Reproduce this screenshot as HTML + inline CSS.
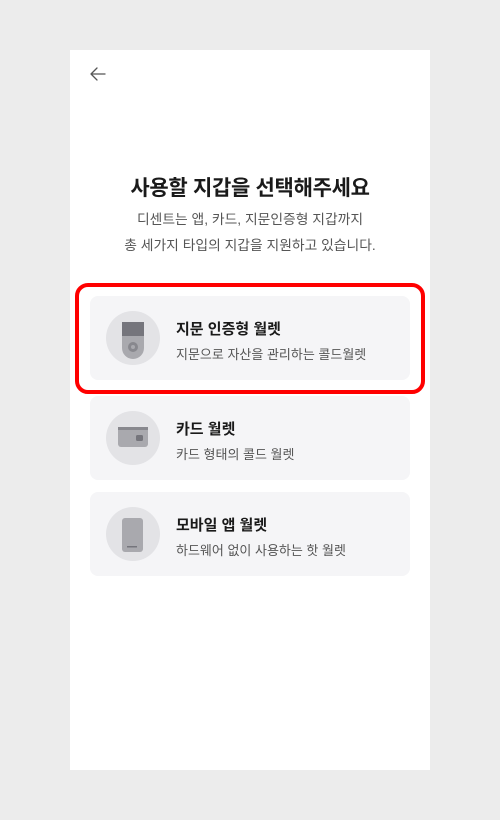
<!DOCTYPE html>
<html><head><meta charset="utf-8"><style>
*{margin:0;padding:0;box-sizing:border-box}
body{width:500px;height:820px;background:#ececec;font-family:"Liberation Sans","Noto Sans CJK KR",sans-serif;position:relative;overflow:hidden}
.panel{position:absolute;left:70px;top:50px;width:360px;height:720px;background:#fff}
.back{position:absolute;left:88px;top:64px}
h1{position:absolute;top:172px;left:70px;width:360px;text-align:center;font-size:21px;font-weight:700;color:#1a1a1a;letter-spacing:-0.3px}
.sub{position:absolute;top:207px;left:70px;width:360px;text-align:center;font-size:13.8px;line-height:26px;color:#555}
.card{position:absolute;left:90px;width:320px;height:84px;background:#f5f5f7;border-radius:8px}
.circ{position:absolute;left:16px;top:15px;width:54px;height:54px;border-radius:50%;background:#e3e3e6}
.t{position:absolute;left:86px;top:22px;font-size:15px;font-weight:700;color:#1a1a1a}
.d{position:absolute;left:86px;top:48px;font-size:13px;color:#555}
.red{position:absolute;left:75px;top:283px;width:350px;height:111px;border:4px solid #f00;border-radius:13px}
</style></head><body>
<div class="panel"></div>
<svg class="back" width="20" height="20" viewBox="0 0 20 20"><path d="M17 10H3M9 4L3 10l6 6" stroke="#555" stroke-width="1.3" fill="none" stroke-linecap="round" stroke-linejoin="round"/></svg>
<h1>사용할 지갑을 선택해주세요</h1>
<div class="sub">디센트는 앱, 카드, 지문인증형 지갑까지<br>총 세가지 타입의 지갑을 지원하고 있습니다.</div>
<div class="card" style="top:296px"><div class="circ"><svg width="54" height="54"><path d="M16 11h22v26a11 11 0 0 1-22 0z" fill="#a9a9ae"/><rect x="16" y="11" width="22" height="14" fill="#75757c"/><circle cx="27" cy="36" r="5" fill="#88888e"/><circle cx="27" cy="36" r="2" fill="#a9a9ae"/></svg></div><div class="t">지문 인증형 월렛</div><div class="d">지문으로 자산을 관리하는 콜드월렛</div></div>
<div class="card" style="top:396px"><div class="circ"><svg width="54" height="54"><rect x="12" y="16" width="30" height="20" rx="3" fill="#a9a9ae"/><rect x="12" y="16" width="30" height="3" fill="#88888e"/><rect x="30" y="24" width="7" height="6" rx="1.5" fill="#75757c"/></svg></div><div class="t">카드 월렛</div><div class="d">카드 형태의 콜드 월렛</div></div>
<div class="card" style="top:492px"><div class="circ"><svg width="54" height="54"><rect x="16" y="11" width="21" height="34" rx="3" fill="#a9a9ae"/><rect x="21" y="39" width="10" height="1.5" fill="#75757c"/></svg></div><div class="t">모바일 앱 월렛</div><div class="d">하드웨어 없이 사용하는 핫 월렛</div></div>
<div class="red"></div>
</body></html>
